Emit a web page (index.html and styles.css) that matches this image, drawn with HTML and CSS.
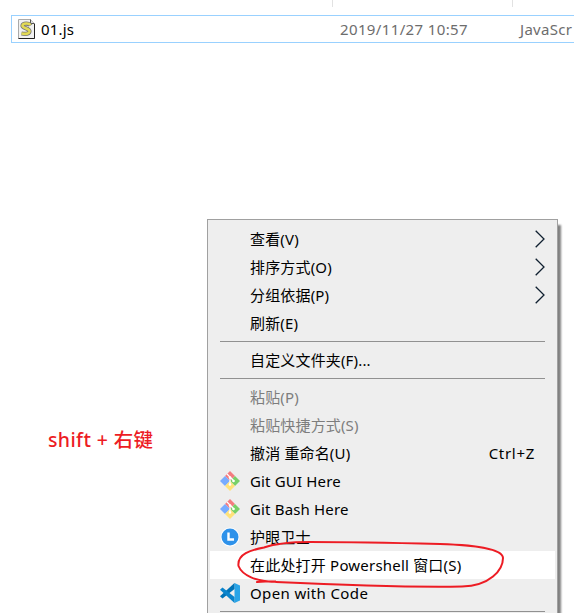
FILE: index.html
```html
<!DOCTYPE html>
<html lang="zh-CN">
<head>
<meta charset="utf-8">
<title>资源管理器</title>
<link rel="stylesheet" href="styles.css">
</head>
<body>
<main class="window">
  <div class="columns"><i></i><i></i><i></i></div>
  <div class="file">
    <svg class="file-icon" viewBox="0 0 18 21"><path d="M.5.5h12l4 4v15H.5z" fill="#f1f1f1" stroke="#aaa"/><path d="M12.500.5v4h4" fill="#ddd" stroke="#555"/><path d="M.5 19.500h16V5" fill="none" stroke="#222"/><path d="M12.500 6.500C11 4 5 4 4.500 6.500c-.5 3 7.500 2.500 7 6-.5 2.500-5 2.500-8 2" fill="none" stroke="#777" stroke-width="4.200"/><path d="M12.500 6C11 4 5 4 4.500 6.500c-.5 3 7.500 2.500 7 6-.5 2.500-5 2.500-8 2" fill="none" stroke="#e3da55" stroke-width="2.600"/></svg>
    <span class="file-name">01.js</span>
    <span class="file-date">2019/11/27 10:57</span>
    <span class="file-type">JavaScr</span>
  </div>
  <div class="workspace">
    <p class="note">shift + 右键</p>
    <div class="menu">
      <div class="item"><span class="label">查看(V)</span><svg class="arrow" viewBox="0 0 10 18"><path d="M.7.7 9 9 .7 17.300"/></svg></div>
      <div class="item"><span class="label">排序方式(O)</span><svg class="arrow" viewBox="0 0 10 18"><path d="M.7.7 9 9 .7 17.300"/></svg></div>
      <div class="item"><span class="label">分组依据(P)</span><svg class="arrow" viewBox="0 0 10 18"><path d="M.7.7 9 9 .7 17.300"/></svg></div>
      <div class="item"><span class="label">刷新(E)</span></div>
      <hr>
      <div class="item"><span class="label">自定义文件夹(F)...</span></div>
      <hr>
      <div class="item disabled"><span class="label">粘贴(P)</span></div>
      <div class="item disabled"><span class="label">粘贴快捷方式(S)</span></div>
      <div class="item"><span class="label">撤消 重命名(U)</span><span class="shortcut">Ctrl+Z</span></div>
      <div class="item"><svg class="icon" viewBox="0 0 20 20"><use href="#git"/></svg><span class="label">Git GUI Here</span></div>
      <div class="item"><svg class="icon" viewBox="0 0 20 20"><use href="#git"/></svg><span class="label">Git Bash Here</span></div>
      <div class="item"><svg class="icon" viewBox="0 0 20 20"><circle cx="10" cy="10" r="9.500" fill="#fff"/><circle cx="10" cy="10" r="8.500" fill="#2f92ea"/><path d="M8.500 5.500v7h5.500" fill="none" stroke="#fff" stroke-width="2.400"/></svg><span class="label">护眼卫士</span></div>
      <div class="item active"><span class="label powershell">在此处打开 Powershell 窗口(S)</span></div>
      <div class="item"><svg class="icon" viewBox="0 0 20 20"><path d="M14.500 0 20 2.500v15L14.500 20z" fill="#2aa5e8"/><path d="M14.500 0v6L2.500 15.500 0 13.200z" fill="#0073b7"/><path d="M14.500 20v-6L2.500 4.500 0 6.800z" fill="#0a84cc"/></svg><span class="label code">Open with Code</span></div>
      <hr>
    </div>
  </div>
  <svg class="ink" viewBox="0 0 574 613"><path d="M257 582C264 581 270 582 276 581.500C256 582 242 575 238.500 566C237 554 251 550 264 547.500C277 543 292 542 310 542C350 542 400 543 440 544C475 545 503 549 503 558C503 570 490 586 462 586.500C400 587.500 340 585 276 582"/></svg>
</main>
<svg class="defs"><defs><g id="git"><path d="M10 0 15 5 10 10 5 5z" fill="#f47c80"/><path d="M5 5 10 10 5 15 0 10z" fill="#78acff"/><path d="M15 5 20 10 15 15 10 10z" fill="#78d068"/><path d="M10 10 15 15 10 20 5 15z" fill="#ffe27a"/><path d="M7 3l3 3v8M10 6l4 4" fill="none" stroke="#fff" stroke-width="1.200"/><circle cx="10" cy="6.500" r="1.300" fill="#fff"/><circle cx="10" cy="13.500" r="1.300" fill="#fff"/><circle cx="13.500" cy="10" r="1.300" fill="#fff"/></g></defs></svg>
</body>
</html>
```
FILE: styles.css
```css
* { box-sizing: border-box; }
body { margin: 0; background: #fff; color: #000; font: 15px/28px "Noto Sans", "Noto Sans CJK SC", sans-serif; }
.window { position: relative; width: 574px; height: 613px; overflow: hidden; }
.columns { display: grid; grid-template-columns: 333px 180px 61px; height: 15px; }
.columns i { height: 7px; border-right: 1px solid #e2e2e2; }
.columns i:last-child { border: 0; }
.file { display: grid; grid-template-columns: 23px 299px 180px 90px; align-items: center; width: 600px; height: 28px; margin-left: 11px; padding-left: 6px; border: 1px solid #99d1ff; color: #6d6d6d; line-height: 26px; }
.file-icon { width: 18px; height: 21px; }
.file-name { color: #000; letter-spacing: .2px; }
.file-date { letter-spacing: .37px; }
.file-type { letter-spacing: .3px; }
.workspace { display: flex; height: 570px; padding-top: 176px; }
.note { width: 159px; margin: 207px 0 0 48px; color: #ed1c24; font-size: 19.5px; font-weight: 500; letter-spacing: .38px; }
.menu { width: 351px; height: 420px; padding: 5px 2px; border: 1px solid #a0a0a0; background: #eee; box-shadow: 3px 6px 2px #808080; }
.item { display: grid; grid-template-columns: 20px 1fr auto; column-gap: 10px; align-items: center; height: 28px; padding: 0 10px; }
.icon { width: 20px; height: 20px; }
.label { grid-column: 2; white-space: nowrap; letter-spacing: .16px; }
.powershell { letter-spacing: .2px; }
.code { letter-spacing: .37px; }
.disabled { color: #7d7d7d; }
.active { background: #fff; }
.arrow { width: 10px; height: 18px; fill: none; stroke: #102030; stroke-width: 1.3; }
.shortcut { margin-right: 10px; letter-spacing: .7px; }
hr { height: 1px; margin: 4px 10px; border: 0; background: #919191; }
.ink { position: absolute; inset: 0; width: 574px; height: 613px; fill: none; stroke: #ed1c24; stroke-width: 2; stroke-linecap: round; }
.defs { position: absolute; width: 0; height: 0; }
```
